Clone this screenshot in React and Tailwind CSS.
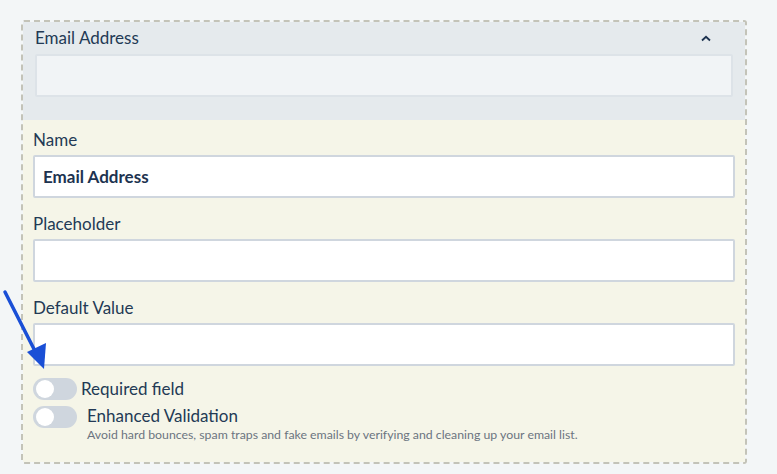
import React from "react";

function Toggle() {
  return (
    <div className="relative h-[22px] w-[44px] shrink-0 rounded-full bg-[#cfd6de]">
      <div className="absolute left-[3px] top-[2px] h-[18px] w-[18px] rounded-full bg-white" />
    </div>
  );
}

function Field({ label, value, mt }) {
  return (
    <div className={mt}>
      <div className="h-[26px] pt-[2px] text-[17px] leading-[24px] text-[#233a55]">{label}</div>
      <div className="mt-[3px] flex h-[43px] items-center rounded-[2px] border-2 border-[#cfd6de] bg-white px-[8px] text-[17px] font-bold text-[#1d3350]">
        {value}
      </div>
    </div>
  );
}

export default function App() {
  return (
    <div
      className="relative h-[474px] w-[777px] overflow-hidden bg-[#f3f6f7] pt-[20px] pl-[21px]"
      style={{ fontFamily: "Lato, 'Open Sans', sans-serif" }}
    >
      <div className="w-[726px] rounded-[3px] border-2 border-dashed border-[#c3c3b8]">
        <div className="bg-[#e5eaed] px-[12px] pt-[4px] pb-[23px]">
          <div className="flex h-[24px] items-center justify-between">
            <span className="text-[17px] leading-[24px] text-[#233a55]">Email Address</span>
            <svg width="10" height="7" viewBox="0 0 10 7" className="mr-[22px]">
              <path d="M1 5.5 L5 1.8 L9 5.5" fill="none" stroke="#1d3350" strokeWidth="1.8" />
            </svg>
          </div>
          <div className="mt-[4px] h-[43px] rounded-[2px] border-2 border-[#dde3e8] bg-[#f1f4f6]" />
        </div>
        <div className="bg-[#f5f5e8] px-[10px] pt-[6px] pb-[20px]">
          <Field label="Name" value="Email Address" mt="" />
          <Field label="Placeholder" value="" mt="mt-[12px]" />
          <Field label="Default Value" value="" mt="mt-[12px]" />
          <div className="mt-[12px] flex items-center gap-[4px]">
            <Toggle />
            <span className="text-[17px] leading-[20px] text-[#233a55]">Required field</span>
          </div>
          <div className="mt-[6px] flex items-start gap-[10px]">
            <Toggle />
            <div>
              <div className="text-[17px] leading-[20px] text-[#233a55]">Enhanced Validation</div>
              <div className="mt-[2px] text-[12.3px] leading-[14px] text-[#6b7480]">
                Avoid hard bounces, spam traps and fake emails by verifying and cleaning up your email list.
              </div>
            </div>
          </div>
        </div>
      </div>
      <svg className="absolute left-0 top-0" width="60" height="380" viewBox="0 0 60 380">
        <line x1="5" y1="292" x2="36" y2="353" stroke="#1a4fd6" strokeWidth="3.5" strokeLinecap="round" />
        <polygon points="44,369 27,352 46,343" fill="#1a4fd6" />
      </svg>
    </div>
  );
}
